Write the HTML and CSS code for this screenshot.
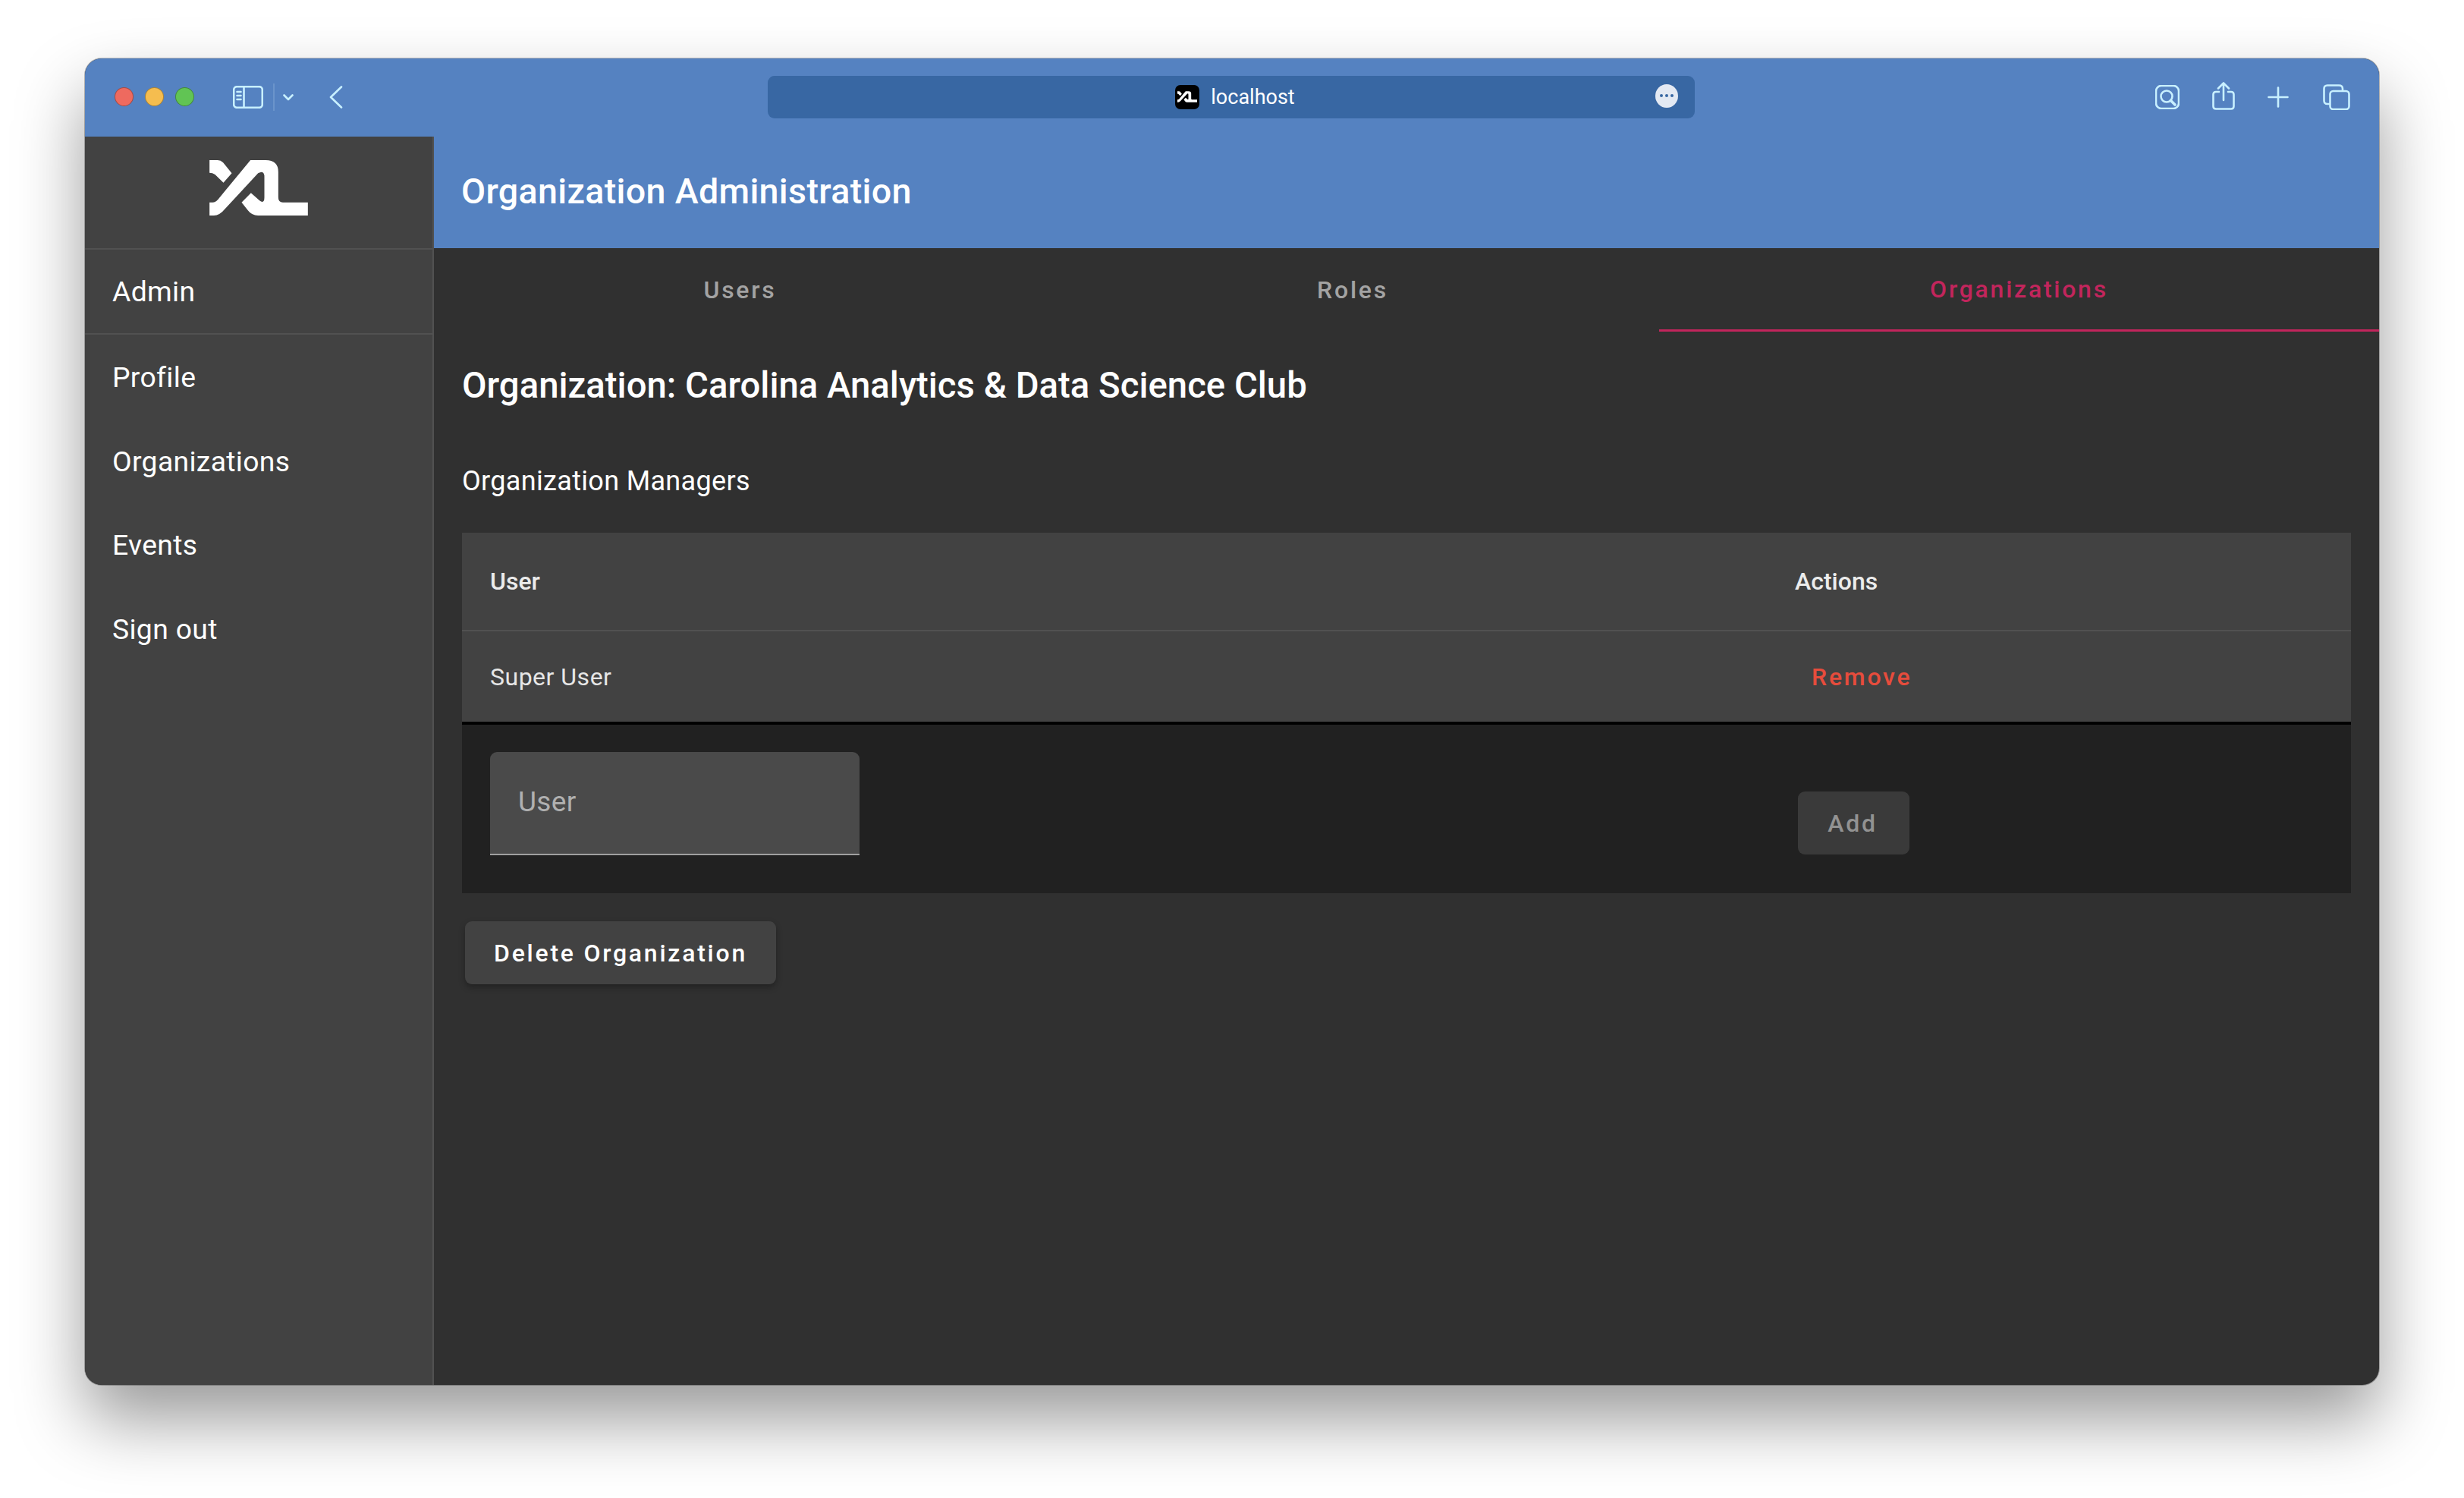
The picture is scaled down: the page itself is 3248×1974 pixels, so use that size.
FILE: index.html
```html
<!DOCTYPE html>
<html lang="en">
<head>
    <meta charset="UTF-8">
    <title>Organization Administration</title>
    <link rel="stylesheet" href="styles.css">
</head>
<body>
    <div class="window">
        <div class="toolbar">
            <div class="toolbar-left">
                <span class="light light-red"></span>
                <span class="light light-yellow"></span>
                <span class="light light-green"></span>
                <svg class="icon icon-sidebar" width="40" height="30" viewBox="0 0 40 30">
                    <rect x="1.2" y="1.2" width="37.6" height="27.6" rx="4"/>
                    <path d="M14.5 1.5V28.5M5.5 8H10.5M5.5 13H10.5M5.5 18H10.5"/>
                </svg>
                <span class="toolbar-divider"></span>
                <svg class="icon icon-chevron" width="14" height="9" viewBox="0 0 14 9">
                    <path d="M1.5 1.5L7 7L12.5 1.5"/>
                </svg>
                <svg class="icon icon-back" width="18" height="30" viewBox="0 0 18 30">
                    <path d="M16 1.5L2 15L16 28.5"/>
                </svg>
            </div>
            <div class="address">
                <span class="favicon">
                    <svg width="26" height="15" viewBox="528 453 389 219"><path class="logo-path" d="M528 453H560Q572 453 582 463L616 505L583 542L550 510Q540 503 528 503ZM690 453H750Q800 453 800 500V600Q800 620 818 620H917V672H720Q695 672 680 652L655 620L692 583L725 612Q745 628 745 600V520Q745 490 720 505L590 645Q568 672 545 672H528V620H540Q552 620 562 608Z"/></svg>
                </span>
                <span class="address-text">localhost</span>
                <span class="address-more"><i></i><i></i><i></i></span>
            </div>
            <div class="toolbar-right">
                <svg class="icon" width="32" height="32" viewBox="0 0 32 32">
                    <rect x="1" y="1" width="30" height="30" rx="7"/>
                    <circle cx="15" cy="15" r="7.5"/>
                    <path d="M20.5 20.5L26 26" class="thick"/>
                </svg>
                <svg class="icon icon-share" width="30" height="37" viewBox="0 0 30 37">
                    <path d="M9 13H5Q1.5 13 1.5 16.5V32Q1.5 35.5 5 35.5H25Q28.5 35.5 28.5 32V16.5Q28.5 13 25 13H21"/>
                    <path d="M15 24V2M8 8.5L15 1.5L22 8.5"/>
                </svg>
                <svg class="icon icon-plus" width="28" height="28" viewBox="0 0 28 28">
                    <path d="M14 1.5V26.5M1.5 14H26.5"/>
                </svg>
                <svg class="icon" width="36" height="34" viewBox="0 0 36 34">
                    <path d="M8 26H6Q1.500 26 1.500 21.500V6Q1.500 1.500 6 1.500H21Q26 1.500 26 6V8"/>
                    <rect x="9.500" y="9" width="25" height="24" rx="4"/>
                </svg>
            </div>
        </div>
        <div class="app">
            <nav class="sidebar">
                <div class="logo">
                    <svg width="130" height="73" viewBox="528 453 389 219"><path class="logo-path" d="M528 453H560Q572 453 582 463L616 505L583 542L550 510Q540 503 528 503ZM690 453H750Q800 453 800 500V600Q800 620 818 620H917V672H720Q695 672 680 652L655 620L692 583L725 612Q745 628 745 600V520Q745 490 720 505L590 645Q568 672 545 672H528V620H540Q552 620 562 608Z"/></svg>
                </div>
                <a class="nav-item nav-admin">Admin</a>
                <a class="nav-item">Profile</a>
                <a class="nav-item">Organizations</a>
                <a class="nav-item">Events</a>
                <a class="nav-item">Sign out</a>
            </nav>
            <main class="main">
                <header class="header">Organization Administration</header>
                <div class="tabs">
                    <div class="tab">Users</div>
                    <div class="tab">Roles</div>
                    <div class="tab tab-active">Organizations</div>
                </div>
                <div class="content">
                    <h1>Organization: Carolina Analytics &amp; Data Science Club</h1>
                    <h2>Organization Managers</h2>
                    <table class="managers">
                        <thead>
                            <tr>
                                <th>User</th>
                                <th class="col-actions">Actions</th>
                            </tr>
                        </thead>
                        <tbody>
                            <tr>
                                <td>Super User</td>
                                <td class="col-actions"><span class="btn-remove">Remove</span></td>
                            </tr>
                        </tbody>
                        <tfoot>
                            <tr>
                                <td><input class="user-input" type="text" placeholder="User"></td>
                                <td class="col-actions"><button class="btn-add" type="button">Add</button></td>
                            </tr>
                        </tfoot>
                    </table>
                    <button class="btn-delete" type="button">Delete Organization</button>
                </div>
            </main>
        </div>
    </div>
</body>
</html>
```

FILE: styles.css
```css
html, body { margin: 0; height: 100%; }
body { background: #fff; padding: 77px 112px 0; box-sizing: border-box; height: 1974px; overflow: hidden; font-family: Roboto, "Liberation Sans", sans-serif; color: #fff; }

.window { display: flex; flex-direction: column; width: 3024px; height: 1748px; border-radius: 22px; background: #303030; box-shadow: 0 0 0 1px rgba(0,0,0,.25), 0 46px 90px rgba(0,0,0,.4); }

.toolbar { display: flex; align-items: center; height: 103px; flex: none; background: #5582c1; border-radius: 22px 22px 0 0; }
.toolbar-left { display: flex; align-items: center; width: 900px; padding: 0 0 2px 39px; box-sizing: border-box; }
.light { width: 25px; height: 25px; border-radius: 50%; margin-right: 15px; box-sizing: border-box; border: 1px solid rgba(0,0,0,.3); }
.light-red { background: #ee6a5f; }
.light-yellow { background: #f5bd4f; }
.light-green { background: #61c454; }
.icon { fill: none; stroke: #c8f0ff; stroke-width: 2.6; stroke-linecap: round; stroke-linejoin: round; flex: none; }
.icon .thick { stroke-width: 3.6; }
.icon-sidebar { margin-left: 36px; }
.toolbar-divider { width: 2px; height: 36px; margin: 0 11px 0 13px; background: #6b94cb; }
.icon-chevron { margin-top: 2px; }
.icon-back { margin-left: 47px; }

.address { display: flex; align-items: center; justify-content: center; position: relative; width: 1222px; height: 56px; margin-top: -2px; padding-left: 10px; box-sizing: border-box; background: #3867a3; border-radius: 9px; font-size: 27px; }
.favicon { display: flex; align-items: center; justify-content: center; width: 32px; height: 32px; background: #000; border-radius: 7px; margin-right: 15px; }
.address-more { position: absolute; right: 22px; top: 11px; display: flex; align-items: center; justify-content: center; gap: 3px; width: 30px; height: 31px; border-radius: 50%; background: #e3e9f3; }
.address-more i { width: 4px; height: 4px; border-radius: 50%; background: #3867a3; }

.toolbar-right { display: flex; align-items: center; padding: 0 0 2px 607px; }
.icon-share { margin-left: 43px; margin-top: -3px; }
.icon-plus { margin-left: 43px; }
.toolbar-right svg:last-child { margin-left: 45px; }

.logo-path { fill: #fff; stroke: none; }

.app { display: flex; flex: 1; min-height: 0; }
.sidebar { width: 460px; flex: none; box-sizing: border-box; background: #424242; border-right: 2px solid #515151; border-radius: 0 0 0 22px; }
.logo { display: flex; height: 149px; box-sizing: border-box; border-bottom: 2px solid #515151; padding: 31px 0 0 164px; }
.logo svg { display: block; }
.nav-item { display: block; height: 110.5px; line-height: 110.5px; padding-left: 36px; font-size: 37.3px; letter-spacing: .33px; color: #fff; }
.nav-admin { height: 110px; border-bottom: 2px solid #515151; margin-bottom: 1px; }

.main { flex: 1; min-width: 0; display: flex; flex-direction: column; }
.header { height: 147px; line-height: 145px; padding-left: 36px; background: #5582c1; font-size: 46.6px; font-weight: 500; letter-spacing: .33px; }

.tabs { display: grid; grid-template-columns: 804px 811px 1fr; height: 110px; flex: none; }
.tab { display: flex; align-items: center; justify-content: center; box-sizing: border-box; padding-left: 3px; font-size: 32px; font-weight: 500; letter-spacing: 2.75px; color: #a3a3a3; }
.tab-active { padding: 1px 0 0; color: #c2255c; border-bottom: 3px solid #c2255c; }

.content { padding: 0 37px; }
h1 { margin: 0; padding: 43px 0 0; font-size: 47.3px; line-height: 56px; font-weight: 500; }
h2 { margin: 0; padding: 70px 0 0; font-size: 36px; line-height: 56px; font-weight: 400; letter-spacing: .33px; }

.managers { width: 2490px; margin-top: 40px; border-collapse: collapse; table-layout: fixed; font-size: 32px; }
.managers th, .managers td { text-align: left; padding: 0 0 0 37px; }
.managers .col-actions { width: 733px; }
.managers th { height: 128px; background: #424242; border-bottom: 2px solid #515151; font-weight: 500; color: #ececec; }
.managers tbody td { height: 119px; background: #424242; border-bottom: 4px solid #000; color: #e6e6e6; letter-spacing: .5px; }
.managers tfoot td { height: 222px; background: #212121; }
.managers tfoot td.col-actions { height: 171px; vertical-align: bottom; padding-bottom: 51px; }
.btn-remove { display: inline-block; margin-left: 22px; font-weight: 500; letter-spacing: 2.75px; color: #e74c3c; }

.user-input { display: block; width: 487px; height: 136px; margin: 0 0 14px; box-sizing: border-box; padding: 0 37px 3px; background: #4a4a4a; border: none; border-bottom: 2px solid #a0a0a0; border-radius: 9px 9px 0 0; font-family: inherit; font-size: 37px; letter-spacing: .33px; color: #fff; outline: none; }
.user-input::placeholder { color: #b0b0b0; opacity: 1; }

.btn-add { display: block; width: 147px; height: 83px; margin-left: 4px; border: none; border-radius: 9px; background: #3a3a3a; color: #929292; font-family: inherit; font-size: 32px; font-weight: 500; letter-spacing: 2.75px; padding: 0 3px 0 0; }

.btn-delete { display: block; width: 410px; height: 83px; margin: 37px 0 0 4px; padding: 0; border: none; border-radius: 9px; background: #424242; color: #fff; font-family: inherit; font-size: 32px; font-weight: 500; letter-spacing: 2.75px; box-shadow: 0 4px 8px rgba(0,0,0,.3); }
```
